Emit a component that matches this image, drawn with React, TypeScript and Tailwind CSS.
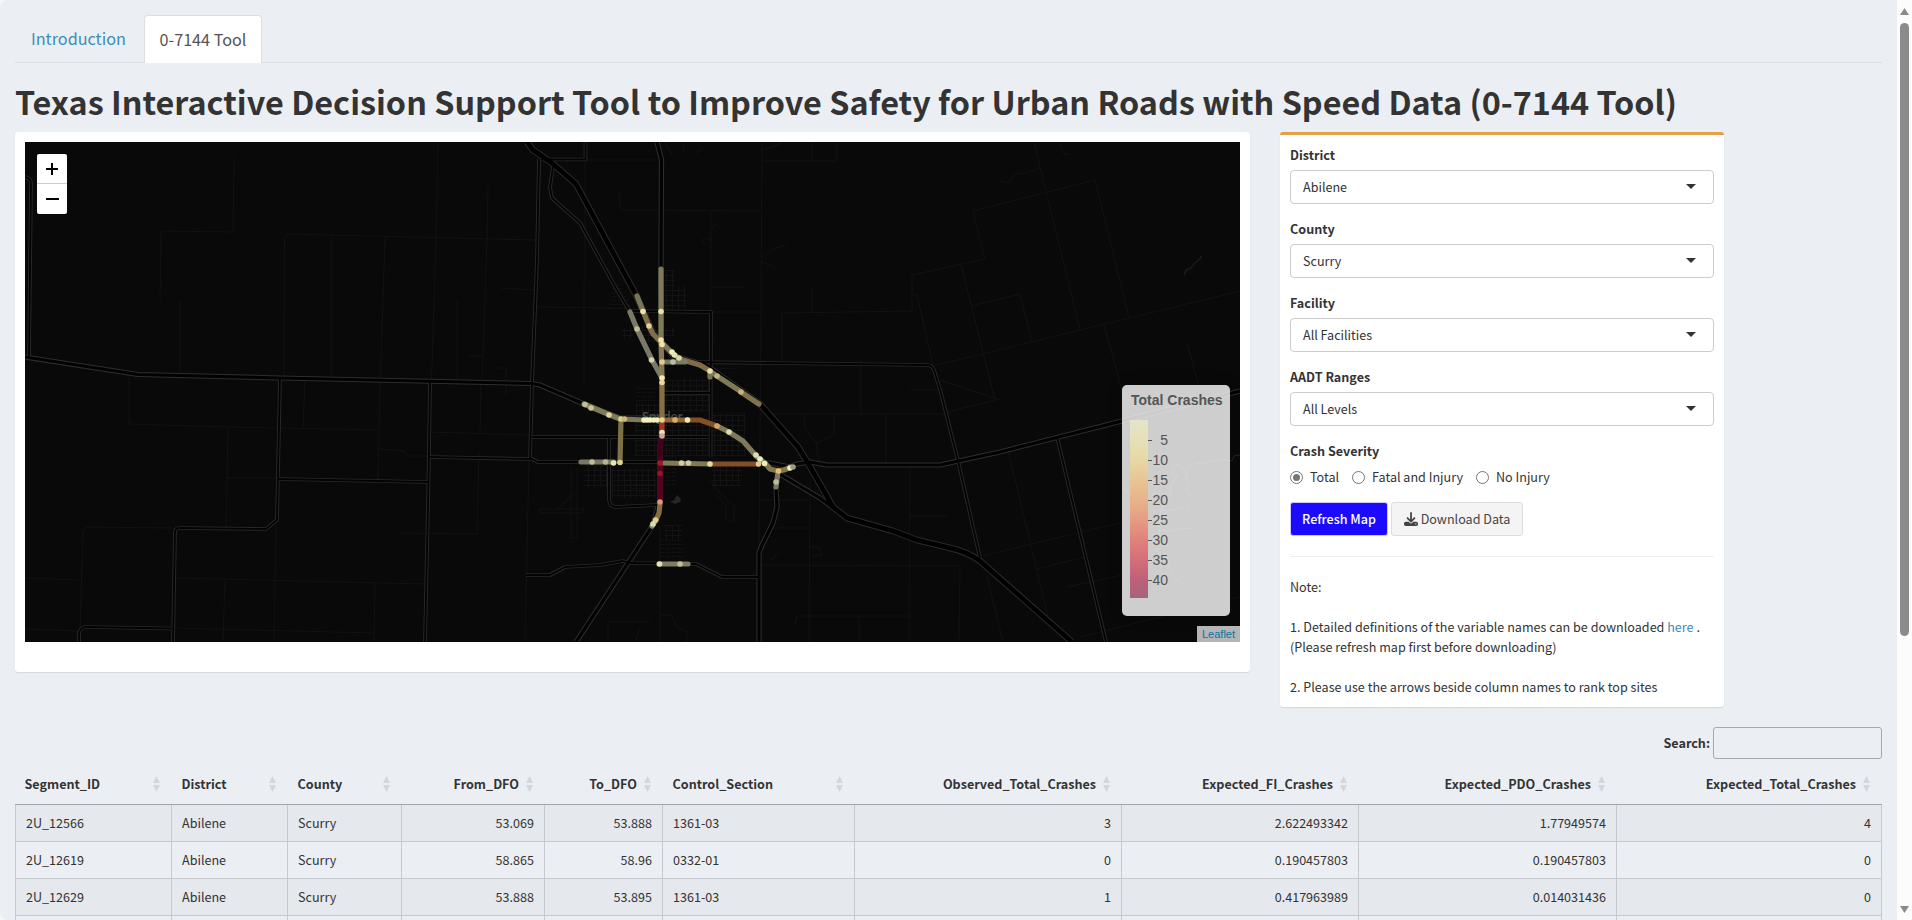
import React from "react";
import { FaDownload } from "react-icons/fa6";

const minorRoads = [
  "M234 157L233 232M161 231L234 232M161 231L160 300M284 377L284.5 238L288 234L535 240M385 237L380.5 379M438 142L436 240L431.5 381M488 188L487 240L482 382M180 300V374M331 237V378M457 300V381",
  "M129 376V424L228 427L379 430M228 427L226 527M305 380L303 428M380 382L378 479M379 449L404 451L408 456H429M227 478H277M430 432L528 435M481 382L480 433M479 452L477 534L400 533",
  "M172 528L86 527L83 531L80 630M25 578L81 580M177 578L424 584M225 578L223 642M276 525L274 642M375 583L374 642M25 629L79 631M173 628L374 633M529 460L525 642M495 368H506V395M468 356H482",
  "M762 142L761 310L759 560M585 160H655M762 161H837V142M763 150L782 143M812 142V161M619 192L620 208L623 210L762 211M711 212V312M762 257L775 248L786 245M762 262L774 267M500 239L535 240M500 288L535 290M536 307L612 308",
  "M584 283V383M585 160V283M712 287H745M712 312H762M912 311L782 313V361M912 311V275L985 259L973 211L1095 180L1129 318M812 287V312M912 294L917 295L933 366L1240 291M1034 142L1080 330M961 265L995 400L947 412M971 306L1020 294L1032 342M1104 325L1122 390M1187 342L1198 384",
  "M999 180L1005 183L1010 181L1015 174L1026 173L1040 168M1060 142L1063 153L1070 155M540 513H583V509H540ZM571 468V538H577V468M557 510L575 492M760 414H952M861 360V414M886 414V464M804 414L805 428L816 443L819 461M834 414V435L816 443",
  "M810 477L809 642M910 467L909 642M760 565L960 566L959 642M910 516H947M809 500H760M809 528H770M795 625L797 616H910M859 616V642M1008 450L1048 617M982 556L1123 522M1037 569L1085 557M1067 587L1122 575M1080 637L1240 597M985 569L1003 642M940 380L1000 400M910 390H944",
  "M710 480L720 493L734 506V522L726 520V506L718 496M608 642V622H650M635 642L640 628M660 525V642M660 615L671 615L678 628L687 632V642M770 560L780 553M810 546L820 548L822 555L812 557M705 245L702 240L706 238L711 240M712 228L718 223M664 142L670 150L672 156M695 155L702 147M683 142L684 153",
];

const mediumRoads = [
  "M585.5 142V159.5H541M539 159L537 260L532 383L530 459",
  "M553 167L550 187L552 198L580 223L617 290L630 312",
  "M627 311L711 312L710.5 457",
  "M683 362L767 363L927 365Q932 365 934 370L941 393L959 465L980 558",
  "M1057 437L1106 642",
  "M532 437H708M609 437V500Q610 507 616 507L657 505",
  "M430 457L532 459L538 462H661M663 393H710",
  "M526 575H550L565 567L600 565L623 561L630 563L696 564L722 577H759",
  "M25 177Q31 178 31 184L29 356",
  "M280 378L277 520L266 529L179 528Q175 528 175 533L173 642",
  "M278 479L428 482M430 382L428.5 482L425 642",
  "M79 642V634Q80 627 86 627L172 628.5",
];

const majorRoads = [
  "M25 357L138 374.5L280 378L532 383.5L540 385L584 404L620 418H661",
  "M657 142L661.5 160L661 268L662 420L660 450V500L653 525L576 642",
  "M760 463H770L790 467L797 464L810 462L827 465H940L1000 452L1240 391",
  "M778 473L820 498L847 518M776 487L777 507L773 523L762 545L759 553V642",
];

const highway =
  "M527 142L533 150L552 163L576 184L637 297L653 333L675 357L706 366L760 404L798 447L808 463L833 507L847 518L893 531L917 540L950 548Q968 552 980 561L1072 642";

const segments: [string, string][] = [
  ["M661 269V340", "#858060"],
  ["M637 296L643 311", "#807a58"],
  ["M643 311L649 326L653 334L660 341", "#86754f"],
  ["M660 341L672 353L680 359", "#858060"],
  ["M680 359L700 365L710 371", "#87734b"],
  ["M710 371L717 376L740 391", "#858058"],
  ["M741 392L759 404", "#87794f"],
  ["M630 312L637 329L652 360L662 378", "#80806a"],
  ["M661 341L662 378", "#8a8058"],
  ["M662 383V418", "#8d7646"],
  ["M663 362H685", "#7c8069"],
  ["M710 371V377", "#807a58"],
  ["M584 404L610 415L620 419L645 420", "#84815e"],
  ["M621 419L620 462", "#86774b"],
  ["M581 462H614", "#80806a"],
  ["M662 420H688", "#9a6c3c"],
  ["M688 420H700L717 426", "#8a5328"],
  ["M717 426L729 432L743 441L757 457L765 463", "#858060"],
  ["M765 463L770 469L778 471L784 470L791 467", "#8a7c50"],
  ["M778 472L776 487", "#80806a"],
  ["M662 463L710 464", "#858158"],
  ["M712 464H758", "#8a5328"],
  ["M662 422V436", "#a83a28"],
  ["M661.5 437L660 447V463", "#47001b"],
  ["M660 465V501", "#600022"],
  ["M660 504L659 513L656 520", "#8a7545"],
  ["M656 520L652 526", "#8f9070"],
  ["M659 564H688", "#848469"],
];

const points: [number, number, string][] = [
  [661, 311.5, "#e6dfa8"], [643, 311.5, "#ece2a4"], [649, 326, "#e5cf92"], [637, 329, "#bdbd96"],
  [661, 340, "#f0e4a8"], [662, 344.5, "#f0e4a8"], [672, 352, "#f1edb4"], [674.5, 355, "#e3e3b8"], [679, 358, "#e3d8a0"],
  [651.5, 360, "#d5d5a8"], [662, 362, "#e3c98e"], [673, 362, "#b9bfa0"], [662, 378, "#f2ecb0"], [662, 382.5, "#ecd692"],
  [710, 371, "#ecdfa2"], [717, 376, "#bdb488"], [741, 392, "#c9b27c"], [585, 404.5, "#bfc09c"], [591, 408, "#d0c590"],
  [609, 415, "#e0d69c"], [621, 419, "#ded291"], [624.5, 419, "#c8b87c"], [644, 420, "#eeeec0"], [647, 420, "#f2f2c2"],
  [650, 420, "#f2f2c2"], [653.5, 420, "#f5efb4"], [657, 420, "#f5f0b6"], [662, 420, "#f0cf88"], [675, 420, "#e2ab64"],
  [687.5, 420, "#ecebc2"], [717, 426, "#d7a468"], [729, 432, "#e0dfae"], [756, 455, "#deddb4"], [760, 459, "#efefc4"],
  [764.5, 463.5, "#f1edb6"], [758.5, 464, "#e3cc95"], [778.5, 471, "#e9be74"], [790, 468, "#efefc8"], [793, 467, "#9d9d80"],
  [776, 482, "#b9bc97"], [710, 464, "#e8d99e"], [688.5, 463, "#ccd0a0"], [681.5, 463, "#d8cf96"], [592, 462, "#bebd96"],
  [605.5, 462, "#b7b68d"], [613.5, 463, "#e8e7b4"], [620, 462.5, "#ddd292"], [662, 432.5, "#ece4b8"], [662, 436, "#cba49a"],
  [660, 463, "#a5182c"], [660, 473.5, "#9c1228"], [660, 502, "#d99a74"], [655.5, 520, "#e7cb88"], [653, 524, "#d9daae"],
  [659.5, 564, "#e3e3b4"], [680, 564, "#bfc098"],
];

function MapTiles() {
  return (
    <svg className="block h-full w-full" viewBox="25 142 1215 500" fill="none" strokeLinejoin="round">
      <defs>
        <pattern id="blocks" width="6" height="5" patternUnits="userSpaceOnUse">
          <path d="M0 .5H6M.5 0V5" stroke="#131313" />
        </pattern>
        <pattern id="dots" width="3" height="4" patternUnits="userSpaceOnUse">
          <path d="M0 .5H1.5" stroke="#161616" />
        </pattern>
      </defs>
      <rect x="25" y="142" width="1215" height="500" fill="#090909" />
      <g stroke="#121212">
        {minorRoads.map((d) => (
          <path key={d} d={d} />
        ))}
      </g>
      <g fill="url(#blocks)">
        <path d="M664 270H675V286H686V310H664ZM642 326H660V343H642ZM663 328H675V336H663ZM636 403H660V418H636ZM634 422H708V456H634ZM665 380H710V412H665ZM712 413H745V456H712ZM683 378H706V390H683ZM584 464H608V487H584ZM612 468H656V498H612ZM664 525H682V540H664ZM622 328H633V339H622ZM712 464H742V486H712Z" />
      </g>
      <g fill="url(#dots)">
        <path d="M612 285L622 283L632 311H608ZM664 440H676V485H664ZM660 540H684V560H660ZM715 364H735V372H715ZM635 388H655V402H635ZM662 480L640 495L620 478Z" />
      </g>
      <g stroke="#292929" strokeWidth="3.7">
        {mediumRoads.map((d) => (
          <path key={d} d={d} />
        ))}
      </g>
      <g stroke="#2e2e2e" strokeWidth="5.2">
        {majorRoads.map((d) => (
          <path key={d} d={d} />
        ))}
      </g>
      <path d={highway} stroke="#2b2b2b" strokeWidth="6.6" />
      <g stroke="#030303" strokeWidth="1.8">
        {mediumRoads.map((d) => (
          <path key={d} d={d} />
        ))}
      </g>
      <g stroke="#020202" strokeWidth="3.2">
        {majorRoads.map((d) => (
          <path key={d} d={d} />
        ))}
      </g>
      <path d={highway} stroke="#000" strokeWidth="4.6" />
      <path d="M670 502L674 500L677 495L681 499L680 502L675 504Z" fill="#262626" />
      <path d="M1184 275L1187 269L1190 269L1194 264L1201 258M1200 256L1202 257" stroke="#262626" />
      <path
        d="M1240 455L1234 456L1232 461L1222 459L1212 461L1204 463L1198 463L1190 466L1184 470L1180 464L1174 466L1172 476L1178 474L1171 485L1170 500L1162 508L1158 528L1162 542L1156 550L1168 560L1172 575L1182 583L1184 586M1186 470L1188 484L1187 492L1194 497M1160 510L1178 510L1186 506L1194 516M1186 512L1190 506M1158 529L1172 531L1180 529L1193 528M1122 488L1128 492"
        stroke="#262626"
      />
      <text x="642" y="421" fill="#4e4e4e" fontSize="12.5" fontWeight="600" fontFamily="Open Sans, sans-serif" textLength="41">
        Snyder
      </text>
      <g strokeWidth="5.2" strokeLinecap="round">
        {segments.map(([d, c]) => (
          <path key={d} d={d} stroke={c} strokeOpacity="0.95" />
        ))}
      </g>
      {points.map(([x, y, c]) => (
        <circle key={`${x}-${y}`} cx={x} cy={y} r="2.8" fill={c} />
      ))}
    </svg>
  );
}

function Legend() {
  const ticks = [5, 10, 15, 20, 25, 30, 35, 40];
  return (
    <div className="absolute top-[243px] right-[10px] h-[231px] w-[108px] rounded-[5px] bg-white/80 px-2 pt-[6px] font-['Liberation_Sans',sans-serif] text-[14px] text-[#555] shadow-[0_0_15px_rgba(0,0,0,0.2)]">
      <div className="pl-px text-[14px] leading-[18px] font-bold whitespace-nowrap">Total Crashes</div>
      <div className="mt-[11px] flex">
        <div className="h-[178px] w-[18px] bg-[linear-gradient(#e5e5cb_0%,#e5deb2_15%,#e6d7a5_23%,#e7c593_34%,#e7b089_47%,#e69c82_56%,#e0807b_68%,#d26c78_80%,#bd6079_90%,#a5647a_100%)]" />
        <div className="flex flex-col pt-[10px]">
          {ticks.map((t) => (
            <div key={t} className="flex h-5 items-center">
              <span className="mt-px h-px w-1 bg-[#555]" />
              <span className="w-4 text-right leading-5">{t}</span>
            </div>
          ))}
        </div>
      </div>
    </div>
  );
}

function MapCard() {
  return (
    <div className="h-[540px] w-[1235px] rounded-[3px] bg-white p-[10px] shadow-[0_1px_1px_rgba(0,0,0,0.1)]">
      <div className="relative h-[500px] w-[1215px] overflow-hidden">
        <MapTiles />
        <div className="absolute top-3 left-3 flex h-[60px] w-[30px] flex-col overflow-hidden rounded-[2px] bg-white">
          <div className="flex h-[30px] items-center justify-center border-b border-[#ccc]">
            <svg width="12" height="12" viewBox="0 0 12 12">
              <path d="M6 0V12M0 6H12" stroke="#000" strokeWidth="2" />
            </svg>
          </div>
          <div className="flex h-[30px] items-center justify-center">
            <svg width="13" height="2">
              <path d="M0 1H13" stroke="#000" strokeWidth="2" />
            </svg>
          </div>
        </div>
        <Legend />
        <div className="absolute right-0 bottom-0 flex h-4 w-[43px] items-center justify-center bg-white/70 font-['Liberation_Sans',sans-serif] text-[11px] leading-4 text-[#0078a8]">
          Leaflet
        </div>
      </div>
    </div>
  );
}

function SelectField({ label, value }: { label: string; value: string }) {
  return (
    <div className="mb-[15px]">
      <div className="mb-[5px] leading-5 font-bold">{label}</div>
      <div className="flex h-[34px] items-center justify-between rounded-[4px] border border-[#ccc] pr-[17px] pl-3">
        <span className="leading-5">{value}</span>
        <svg width="10" height="5" className="mb-[2px]">
          <path d="M0 0H10L5 5Z" fill="#333" />
        </svg>
      </div>
    </div>
  );
}

function Radio({ label, checked }: { label: string; checked?: boolean }) {
  return (
    <div className="flex items-center">
      <span className="flex h-[13px] w-[13px] items-center justify-center rounded-full border border-[#767676]">
        {checked && <span className="h-[7px] w-[7px] rounded-full bg-[#767676]" />}
      </span>
      <span className="ml-[7px] leading-5">{label}</span>
    </div>
  );
}

function ControlPanel() {
  return (
    <div className="h-[575px] w-[444px] rounded-[3px] border-t-[3px] border-[#e59f48] bg-white p-[10px] shadow-[0_1px_1px_rgba(0,0,0,0.1)]">
      <SelectField label="District" value="Abilene" />
      <SelectField label="County" value="Scurry" />
      <SelectField label="Facility" value="All Facilities" />
      <SelectField label="AADT Ranges" value="All Levels" />
      <div className="leading-5 font-bold">Crash Severity</div>
      <div className="mt-[6px] flex h-5 items-center gap-[13px]">
        <Radio label="Total" checked />
        <Radio label="Fatal and Injury" />
        <Radio label="No Injury" />
      </div>
      <div className="mt-[15px] flex gap-[3px]">
        <button className="h-[34px] w-[98px] rounded-[3px] border border-[#cdc8fb] bg-[#1c0afc] font-medium whitespace-nowrap text-white">
          Refresh Map
        </button>
        <button className="flex h-[34px] w-[132px] items-center justify-center gap-[3px] rounded-[3px] border border-[#ddd] bg-[#f4f4f4] whitespace-nowrap text-[#444]">
          <FaDownload size={14} />
          Download Data
        </button>
      </div>
      <div className="mt-5 mb-5 border-t border-[#eee]" />
      <div className="leading-5">
        <div>Note:</div>
        <div className="mt-5 whitespace-nowrap">
          1. Detailed definitions of the variable names can be downloaded <a className="text-[#3c8dbc]">here</a> .
        </div>
        <div>(Please refresh map first before downloading)</div>
        <div className="mt-5">2. Please use the arrows beside column names to rank top sites</div>
      </div>
    </div>
  );
}

const columns = [
  { name: "Segment_ID", num: false },
  { name: "District", num: false },
  { name: "County", num: false },
  { name: "From_DFO", num: true },
  { name: "To_DFO", num: true },
  { name: "Control_Section", num: false },
  { name: "Observed_Total_Crashes", num: true },
  { name: "Expected_FI_Crashes", num: true },
  { name: "Expected_PDO_Crashes", num: true },
  { name: "Expected_Total_Crashes", num: true },
];

const rows = [
  ["2U_12566", "Abilene", "Scurry", "53.069", "53.888", "1361-03", "3", "2.622493342", "1.77949574", "4"],
  ["2U_12619", "Abilene", "Scurry", "58.865", "58.96", "0332-01", "0", "0.190457803", "0.190457803", "0"],
  ["2U_12629", "Abilene", "Scurry", "53.888", "53.895", "1361-03", "1", "0.417963989", "0.014031436", "0"],
  ["", "", "", "", "", "", "", "", "", ""],
];

const gridCols = "grid grid-cols-[157px_116px_114px_143px_118px_192px_267px_237px_258px_265px]";

function SortIcon() {
  return (
    <svg width="7" height="16" viewBox="0 0 7 16" fill="#d3d6db">
      <path d="M3.5 0L7 7H0ZM3.5 16L7 9H0Z" />
    </svg>
  );
}

function ResultsTable() {
  return (
    <div className="w-[1867px]">
      <div className={`${gridCols} h-[41px] border-b border-[#a2a5aa]`}>
        {columns.map((c) => (
          <div
            key={c.name}
            className={`flex items-center gap-[7px] pr-3 pl-[9.5px] font-bold ${c.num ? "justify-end" : "justify-between"}`}
          >
            <span>{c.name}</span>
            <SortIcon />
          </div>
        ))}
      </div>
      {rows.map((r, i) => (
        <div key={i} className={`${gridCols} h-[37px] border-b border-[#c6cace] ${i % 2 ? "" : "bg-[#e5e8ec]"}`}>
          {r.map((v, j) => (
            <div
              key={j}
              className={`flex items-center border-r border-[#c6cace] px-[10px] first:border-l ${columns[j].num ? "justify-end" : ""}`}
            >
              {v}
            </div>
          ))}
        </div>
      ))}
    </div>
  );
}

function ScrollBar() {
  return (
    <div className="flex h-full w-[15px] flex-col items-center bg-[#fcfcfc]">
      <svg width="9" height="8" className="mt-[8px] shrink-0">
        <path d="M4.5 0L9 7H0Z" fill="#8b8b8b" />
      </svg>
      <div className="mt-[7px] h-[613px] w-[9px] rounded-full bg-[#8b8b8b]" />
      <svg width="9" height="8" className="mt-auto mb-[7px] shrink-0">
        <path d="M4.5 8L9 1H0Z" fill="#8b8b8b" />
      </svg>
    </div>
  );
}

export default function App() {
  return (
    <div className="flex h-[920px] w-[1912px] overflow-hidden bg-[#f6f7f8] font-['Noto_Sans_CJK_SC',sans-serif] text-[12.58px] leading-5 text-[#333]">
      <main className="h-full w-[1897px] overflow-hidden rounded-l-[8px] bg-[#ebeff4] px-[15px] pt-[15px]">
        <nav className="flex h-12 border-b border-[#ddd] text-[16.2px]">
          <a className="flex h-12 w-[129px] items-center pb-[2px] pl-4 text-[#3c8dbc]">Introduction</a>
          <a className="flex h-12 w-[118px] items-center justify-center rounded-t-[4px] border border-b-0 border-[#ddd] bg-white pb-[2px] text-[#555]">
            0-7144 Tool
          </a>
        </nav>
        <h1 className="mt-[18px] mb-3 h-[39px] text-[32.36px] leading-[39px] font-bold whitespace-nowrap">
          Texas Interactive Decision Support Tool to Improve Safety for Urban Roads with Speed Data (0-7144 Tool)
        </h1>
        <div className="flex items-start gap-[30px]">
          <MapCard />
          <ControlPanel />
        </div>
        <div className="mt-5 flex h-8 items-center justify-end gap-[3px]">
          <label className="font-bold">Search:</label>
          <input className="h-8 w-[169px] rounded-[3px] border border-[#a5a8ac] bg-transparent" />
        </div>
        <div className="mt-[5px]">
          <ResultsTable />
        </div>
      </main>
      <ScrollBar />
    </div>
  );
}
